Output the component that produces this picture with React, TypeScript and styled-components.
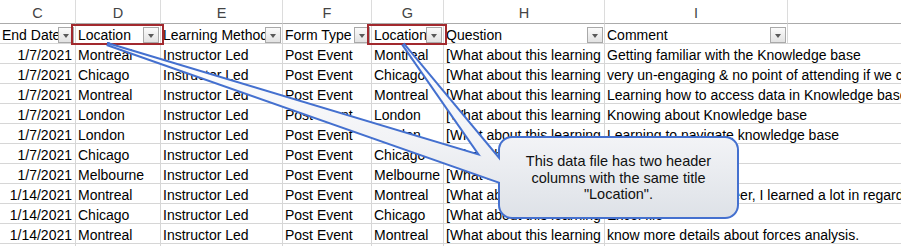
import styled, { createGlobalStyle } from "styled-components";

const GlobalStyle = createGlobalStyle`
	html, body {
		margin: 0;
		padding: 0;
		background: #ffffff;
		overflow: hidden;
	}
	* {
		box-sizing: border-box;
	}
`;

type Column = { letter: string; title: string; width: string; align?: "left" | "right"; spill?: boolean };

const columns: Column[] = [
	{ letter: "C", title: "End Date", width: "76px", align: "right" },
	{ letter: "D", title: "Location", width: "85px" },
	{ letter: "E", title: "Learning Method", width: "122px" },
	{ letter: "F", title: "Form Type", width: "89px" },
	{ letter: "G", title: "Location", width: "72px" },
	{ letter: "H", title: "Question", width: "161px" },
	{ letter: "I", title: "Comment", width: "183px", spill: true },
	{ letter: "", title: "", width: "1fr" },
];

const highlighted = [1, 4];

const question = "[What about this learning experience was most valuable?]";

const rows: string[][] = [
	["1/7/2021", "Montreal", "Instructor Led", "Post Event", "Montreal", question, "Getting familiar with the Knowledge base"],
	["1/7/2021", "Chicago", "Instructor Led", "Post Event", "Chicago", question, "very un-engaging & no point of attending if we could just read the slides"],
	["1/7/2021", "Montreal", "Instructor Led", "Post Event", "Montreal", question, "Learning how to access data in Knowledge base"],
	["1/7/2021", "London", "Instructor Led", "Post Event", "London", question, "Knowing about Knowledge base"],
	["1/7/2021", "London", "Instructor Led", "Post Event", "London", question, "Learning to navigate knowledge base"],
	["1/7/2021", "Chicago", "Instructor Led", "Post Event", "Chicago", question, "Search tips"],
	["1/7/2021", "Melbourne", "Instructor Led", "Post Event", "Melbourne", question, "Good overview"],
	["1/14/2021", "Montreal", "Instructor Led", "Post Event", "Montreal", question, "As a new field engineer, I learned a lot in regards to the tools"],
	["1/14/2021", "Chicago", "Instructor Led", "Post Event", "Chicago", question, "Excel file"],
	["1/14/2021", "Montreal", "Instructor Led", "Post Event", "Montreal", question, "know more details about forces analysis."],
	["", "", "", "", "", "", ""],
];

export default function App() {
	return (
		<>
			<GlobalStyle />
			<Page>
				<Sheet $template={columns.map((c) => c.width).join(" ")}>
					{columns.map((c, i) => (
						<LetterCell key={`l${i}`} $last={i === columns.length - 1}>
							{c.letter}
						</LetterCell>
					))}
					{columns.map((c, i) => (
						<FilterCell key={`f${i}`} $marked={highlighted.includes(i)} $last={i === columns.length - 1}>
							<span>{c.title}</span>
							{c.title && <FilterButton />}
						</FilterCell>
					))}
					{rows.map((row, r) =>
						columns.map((c, i) => (
							<DataCell key={`${r}-${i}`} $align={c.align} $spill={!!c.spill} $last={i === columns.length - 1}>
								{row[i] ?? ""}
							</DataCell>
						))
					)}
				</Sheet>

				<Callout viewBox="0 0 901 246" width="901" height="246">
					<defs>
						<linearGradient id="calloutFill" x1="0" y1="40" x2="0" y2="220" gradientUnits="userSpaceOnUse">
							<stop offset="0" stopColor="#ffffff" />
							<stop offset="0.55" stopColor="#f2f3f6" />
							<stop offset="1" stopColor="#dde1e7" />
						</linearGradient>
					</defs>
					<g fill="none" stroke="#4470cf" strokeWidth="4" strokeLinejoin="miter">
						<rect x="500" y="138" width="237" height="79" rx="12" />
						<polygon points="107,44 520,168 520,189" />
						<polygon points="403,44 512,175 494,175" />
					</g>
					<g fill="url(#calloutFill)">
						<rect x="500" y="138" width="237" height="79" rx="12" />
						<polygon points="107,44 520,168 520,189" />
						<polygon points="403,44 512,175 494,175" />
					</g>
				</Callout>
				<CalloutText>
					This data file has two header
					<br />
					columns with the same title
					<br />
					"Location".
				</CalloutText>
			</Page>
		</>
	);
}

const Page = styled.div`
	position: relative;
	width: 901px;
	height: 246px;
	overflow: hidden;
	font-family: "Liberation Sans", Arial, sans-serif;
	font-size: 14px;
	color: #000000;
`;

const Sheet = styled.div<{ $template: string }>`
	display: grid;
	grid-template-columns: ${({ $template }) => $template};
	grid-auto-rows: 20px;
	grid-template-rows: 24px;
`;

const LetterCell = styled.div<{ $last: boolean }>`
	display: flex;
	align-items: center;
	justify-content: center;
	height: 24px;
	padding-top: 2px;
	color: #444444;
	font-size: 14.5px;
	background: #ffffff;
	border-bottom: 1px solid #ababab;
	border-right: ${({ $last }) => ($last ? "none" : "1px solid #dcdcdc")};
`;

const FilterCell = styled.div<{ $marked: boolean; $last: boolean }>`
	position: relative;
	display: flex;
	align-items: center;
	padding: 2px 0 0 2px;
	white-space: nowrap;
	border-bottom: 1px solid #d6d6d6;
	border-right: ${({ $last }) => ($last ? "none" : "1px solid #d6d6d6")};

	span {
		overflow: hidden;
		display: block;
		width: 100%;
	}

	&::after {
		content: "";
		display: ${({ $marked }) => ($marked ? "block" : "none")};
		position: absolute;
		left: -5px;
		right: -4px;
		top: 0;
		bottom: -2px;
		border: 2px solid #a2292e;
		z-index: 2;
	}
`;

const FilterButton = styled.div`
	position: absolute;
	right: 1px;
	bottom: 0;
	width: 16px;
	height: 16px;
	border: 1px solid #a9a9a9;
	background: linear-gradient(#fbfbfb, #e2e2e2);
	z-index: 1;

	&::after {
		content: "";
		position: absolute;
		left: 3.5px;
		top: 5.5px;
		border-left: 3.5px solid transparent;
		border-right: 3.5px solid transparent;
		border-top: 4px solid #595959;
	}
`;

const DataCell = styled.div<{ $align?: "left" | "right"; $spill: boolean; $last: boolean }>`
	position: relative;
	padding: 1px 3px 0 2px;
	line-height: 20px;
	white-space: nowrap;
	overflow: ${({ $spill }) => ($spill ? "visible" : "hidden")};
	text-align: ${({ $align }) => $align ?? "left"};
	border-bottom: 1px solid #d6d6d6;
	border-right: ${({ $spill, $last }) => ($spill || $last ? "none" : "1px solid #d6d6d6")};
	z-index: ${({ $spill }) => ($spill ? 1 : 0)};
`;

const Callout = styled.svg`
	position: absolute;
	left: 0;
	top: 0;
	z-index: 5;
	pointer-events: none;
`;

const CalloutText = styled.div`
	position: absolute;
	left: 500px;
	top: 138px;
	width: 237px;
	height: 79px;
	z-index: 6;
	display: flex;
	align-items: center;
	justify-content: center;
	text-align: center;
	font-size: 14.5px;
	line-height: 16.5px;
	color: #111111;
	padding-top: 1px;
`;
